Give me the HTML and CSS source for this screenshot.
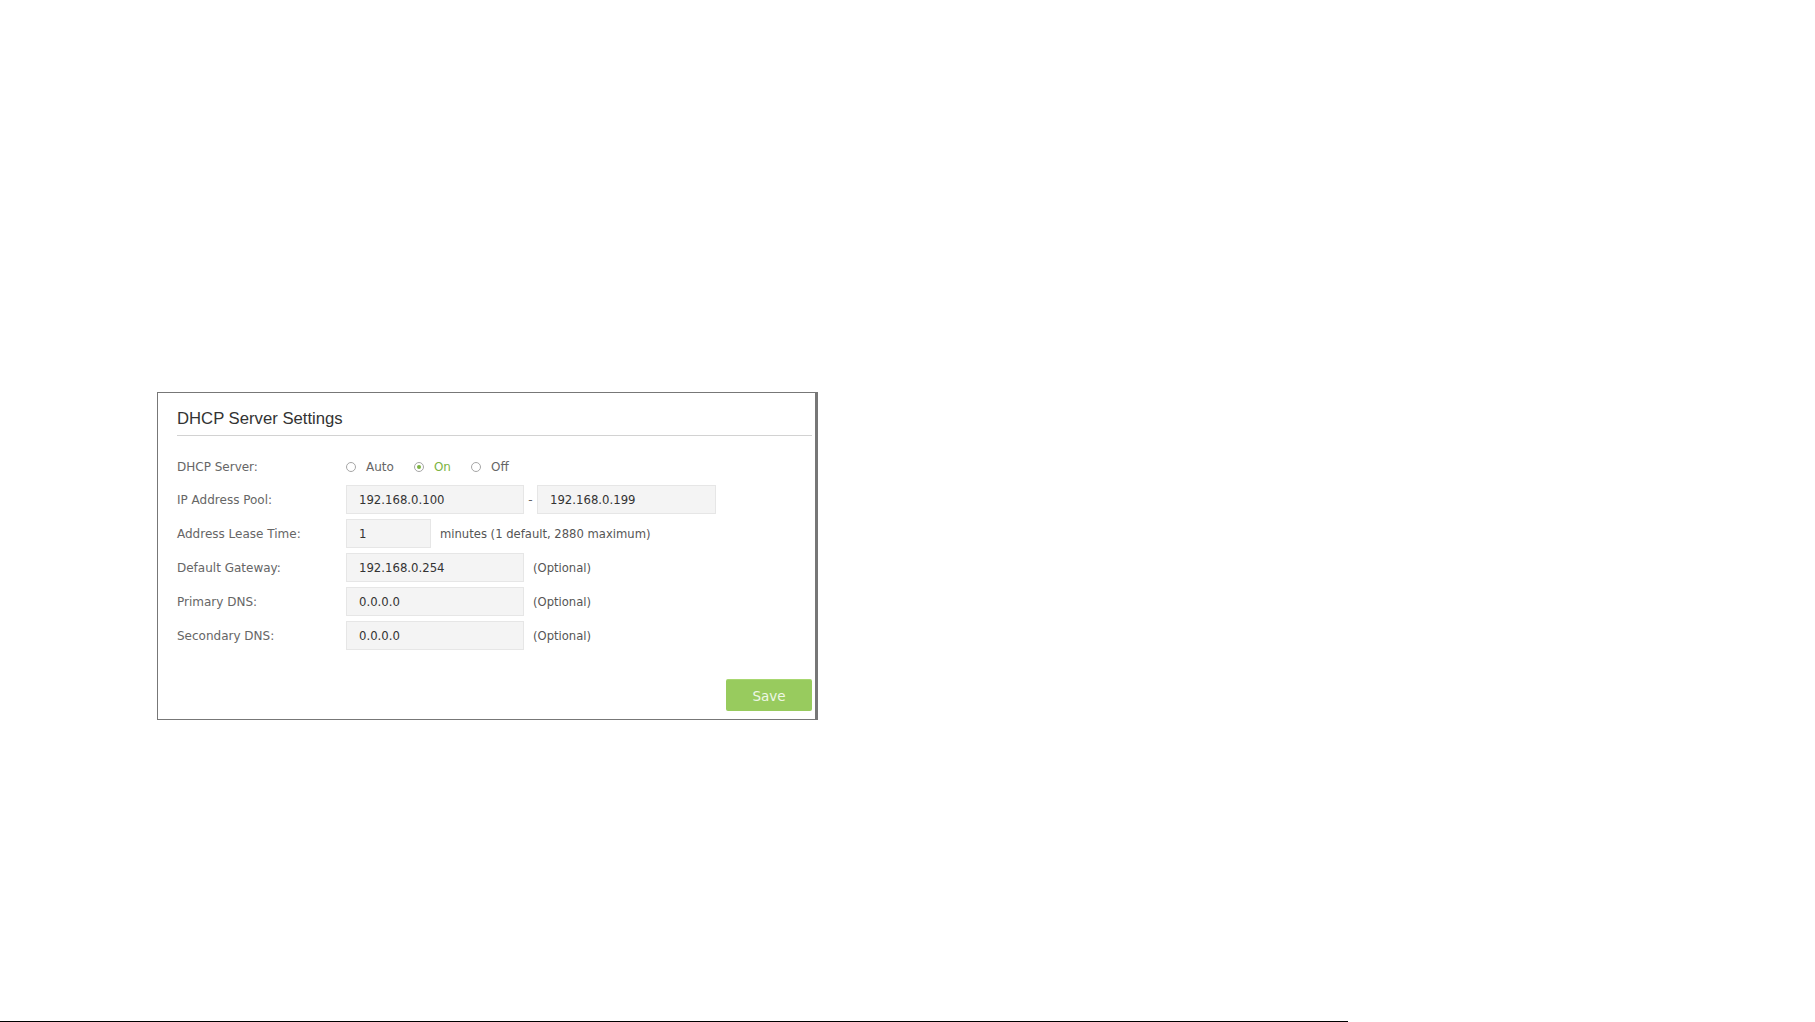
FILE: index.html
```html
<!DOCTYPE html>
<html lang="en">

<head>
    <meta charset="UTF-8">
    <meta name="viewport" content="width=device-width, initial-scale=1.0">
    <title>DHCP Server Settings</title>
    <link rel="stylesheet" href="styles.css">
</head>

<body>
    <div class="page">
        <div class="panel">
            <h2 class="panel-title">DHCP Server Settings</h2>

            <div class="rows">
                <div class="row row-radio">
                    <span class="row-label">DHCP Server:</span>
                    <div class="radio-group">
                        <span class="radio"><span class="radio-dot"></span>Auto</span>
                        <span class="radio checked"><span class="radio-dot"></span>On</span>
                        <span class="radio"><span class="radio-dot"></span>Off</span>
                    </div>
                </div>
                <div class="row">
                    <span class="row-label">IP Address Pool:</span>
                    <input class="field" type="text" value="192.168.0.100">
                    <span class="dash">-</span>
                    <input class="field field-wide" type="text" value="192.168.0.199">
                </div>
                <div class="row">
                    <span class="row-label">Address Lease Time:</span>
                    <input class="field field-short" type="text" value="1">
                    <span class="note">minutes (1 default, 2880 maximum)</span>
                </div>
                <div class="row">
                    <span class="row-label">Default Gateway:</span>
                    <input class="field" type="text" value="192.168.0.254">
                    <span class="note">(Optional)</span>
                </div>
                <div class="row">
                    <span class="row-label">Primary DNS:</span>
                    <input class="field" type="text" value="0.0.0.0">
                    <span class="note">(Optional)</span>
                </div>
                <div class="row">
                    <span class="row-label">Secondary DNS:</span>
                    <input class="field" type="text" value="0.0.0.0">
                    <span class="note">(Optional)</span>
                </div>
            </div>

            <div class="actions">
                <button class="save-btn">Save</button>
            </div>
        </div>

        <div class="page-line"></div>
    </div>
</body>

</html>
```

FILE: styles.css
```css
body {
    font-family: "DejaVu Sans", Verdana, sans-serif;
    font-size: 12px;
    background-color: #ffffff;
    margin: 0;
    padding: 0;
}

.page {
    height: 1022px;
    display: flex;
    flex-direction: column;
}

.panel {
    box-sizing: border-box;
    width: 661px;
    height: 328px;
    margin: 392px 0 0 157px;
    padding: 0 3px 8px 19px;
    border: 1px solid #777777;
    border-right-width: 3px;
    display: flex;
    flex-direction: column;
}

.panel-title {
    margin: 0;
    padding: 16px 0 6px;
    font-family: "Liberation Sans", Arial, sans-serif;
    font-size: 16.7px;
    font-weight: normal;
    line-height: 20px;
    color: #333333;
    border-bottom: 1px solid #d2d2d2;
}

.rows {
    padding-top: 15px;
    display: flex;
    flex-direction: column;
    gap: 5px;
}

.row {
    box-sizing: border-box;
    height: 29px;
    display: flex;
    align-items: center;
}

.row-radio {
    padding-top: 3px;
}

.row-label {
    width: 169px;
    flex-shrink: 0;
    color: #666666;
}

.radio-group {
    display: flex;
    align-items: center;
}

.radio {
    display: flex;
    align-items: center;
    margin-right: 20px;
    color: #666666;
}

.radio-dot {
    box-sizing: border-box;
    width: 10px;
    height: 10px;
    margin-right: 10px;
    border: 1px solid #a6a6a6;
    border-radius: 50%;
    background-color: #ffffff;
    display: flex;
    align-items: center;
    justify-content: center;
}

.radio.checked {
    color: #7cb342;
}

.radio.checked .radio-dot::after {
    content: "";
    width: 4px;
    height: 4px;
    border-radius: 50%;
    background-color: #7cb342;
}

.field {
    box-sizing: border-box;
    width: 178px;
    height: 29px;
    margin: 0;
    padding: 0 12px;
    border: 1px solid #e6e6e6;
    border-radius: 0;
    background-color: #f4f4f4;
    font-family: "DejaVu Sans", Verdana, sans-serif;
    font-size: 11.7px;
    color: #333333;
    outline: none;
}

.field-wide {
    width: 179px;
}

.field-short {
    width: 85px;
}

.dash {
    width: 13px;
    text-align: center;
    color: #666666;
}

.note {
    margin-left: 9px;
    font-size: 11.6px;
    color: #555555;
}

.actions {
    margin-top: auto;
    display: flex;
    justify-content: flex-end;
}

.save-btn {
    width: 86px;
    height: 32px;
    border: none;
    border-top: 1px solid #a8d770;
    border-radius: 2px;
    background-color: #98cb5e;
    color: #eef7e6;
    font-family: "DejaVu Sans", Verdana, sans-serif;
    font-size: 13.5px;
    cursor: pointer;
}

.save-btn:hover {
    background-color: #8bc34a;
}

.page-line {
    margin-top: auto;
    width: 1348px;
    height: 1px;
    background-color: #000000;
}
```
